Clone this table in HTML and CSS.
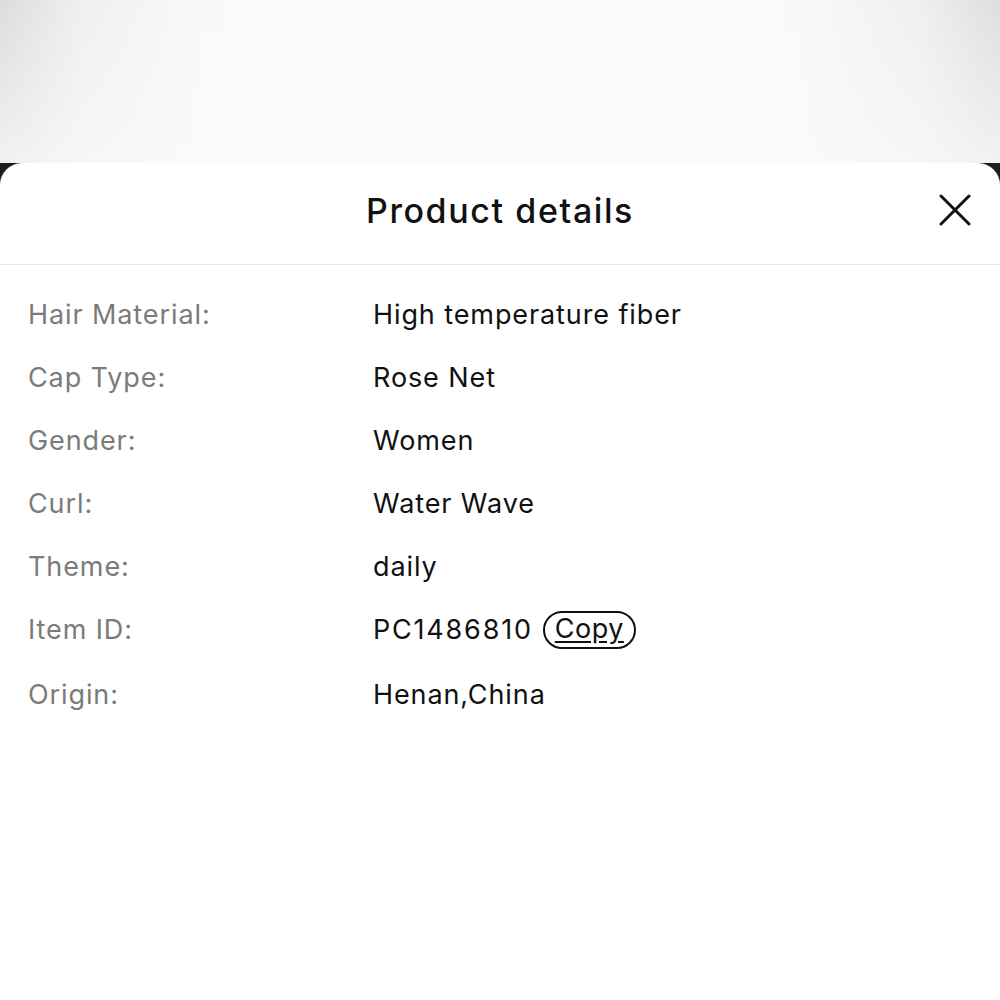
FILE: index.html
```html
<!DOCTYPE html>
<html>
<head>
<meta charset="utf-8">
<link rel="stylesheet" href="styles.css">
</head>
<body>
<div class="backdrop"></div>
<div class="dim">
  <section class="sheet">
    <header class="sheet-head">
      <h1 class="title">Product details</h1>
      <button class="close" aria-label="Close">
        <svg width="32" height="32" viewBox="0 0 32 32"><path d="M2 2 L30 30 M30 2 L2 30" stroke="#111" stroke-width="3" stroke-linecap="round" fill="none"/></svg>
      </button>
    </header>
    <dl class="details">
      <div class="row"><dt>Hair Material:</dt><dd>High temperature fiber</dd></div>
      <div class="row"><dt>Cap Type:</dt><dd>Rose Net</dd></div>
      <div class="row"><dt>Gender:</dt><dd>Women</dd></div>
      <div class="row"><dt>Curl:</dt><dd>Water Wave</dd></div>
      <div class="row"><dt>Theme:</dt><dd>daily</dd></div>
      <div class="row row-id"><dt>Item ID:</dt><dd><span class="item-id">PC1486810</span><span class="copy">Copy</span></dd></div>
      <div class="row"><dt>Origin:</dt><dd>Henan,China</dd></div>
    </dl>
  </section>
</div>
</body>
</html>
```

FILE: styles.css
```css
html, body {
  margin: 0;
  padding: 0;
  height: 1000px;
  overflow: hidden;
  font-family: Inter, "Liberation Sans", Arial, sans-serif;
}
.backdrop {
  height: 163px;
  background:
    linear-gradient(180deg, rgba(255,255,255,0) 0%, rgba(250,250,250,0.7) 100%),
    linear-gradient(90deg, #dcdcdc 0%, #efefef 8%, #f9f9f9 20%, #fbfbfb 50%, #f9f9f9 80%, #efefef 92%, #dedede 100%);
}
.dim {
  background: #1e1e1e;
  height: 837px;
}
.sheet {
  background: #fff;
  height: 100%;
  border-radius: 22px 22px 0 0;
}
.sheet-head {
  height: 101px;
  border-bottom: 1px solid #e6e6e6;
  display: flex;
  align-items: center;
  justify-content: center;
  position: relative;
}
.title {
  margin: 0;
  font-size: 34px;
  font-weight: 500;
  color: #111;
  letter-spacing: 1.6px;
  margin-top: -6px;
}
.close {
  position: absolute;
  right: 29px;
  top: 31px;
  width: 32px;
  height: 32px;
  padding: 0;
  border: 0;
  background: none;
}
.close svg { display: block; }
.details {
  margin: 0;
  padding: 30px 0 0 28px;
}
.row {
  display: flex;
  height: 63px;
  align-items: flex-start;
  font-size: 27px;
  line-height: 40px;
  letter-spacing: 0.9px;
}
.row-id { height: 65px; }
.row dt {
  width: 345px;
  color: #7b7b7b;
}
.row dd {
  margin: 0;
  color: #111;
  display: flex;
  align-items: center;
}
.item-id {
  letter-spacing: 1.8px;
}
.copy {
  margin-left: 10px;
  border: 2px solid #111;
  border-radius: 20px;
  padding: 0 10px;
  height: 34px;
  line-height: 32px;
  letter-spacing: 0.5px;
  text-decoration: underline;
  text-underline-offset: 3px;
}
```
